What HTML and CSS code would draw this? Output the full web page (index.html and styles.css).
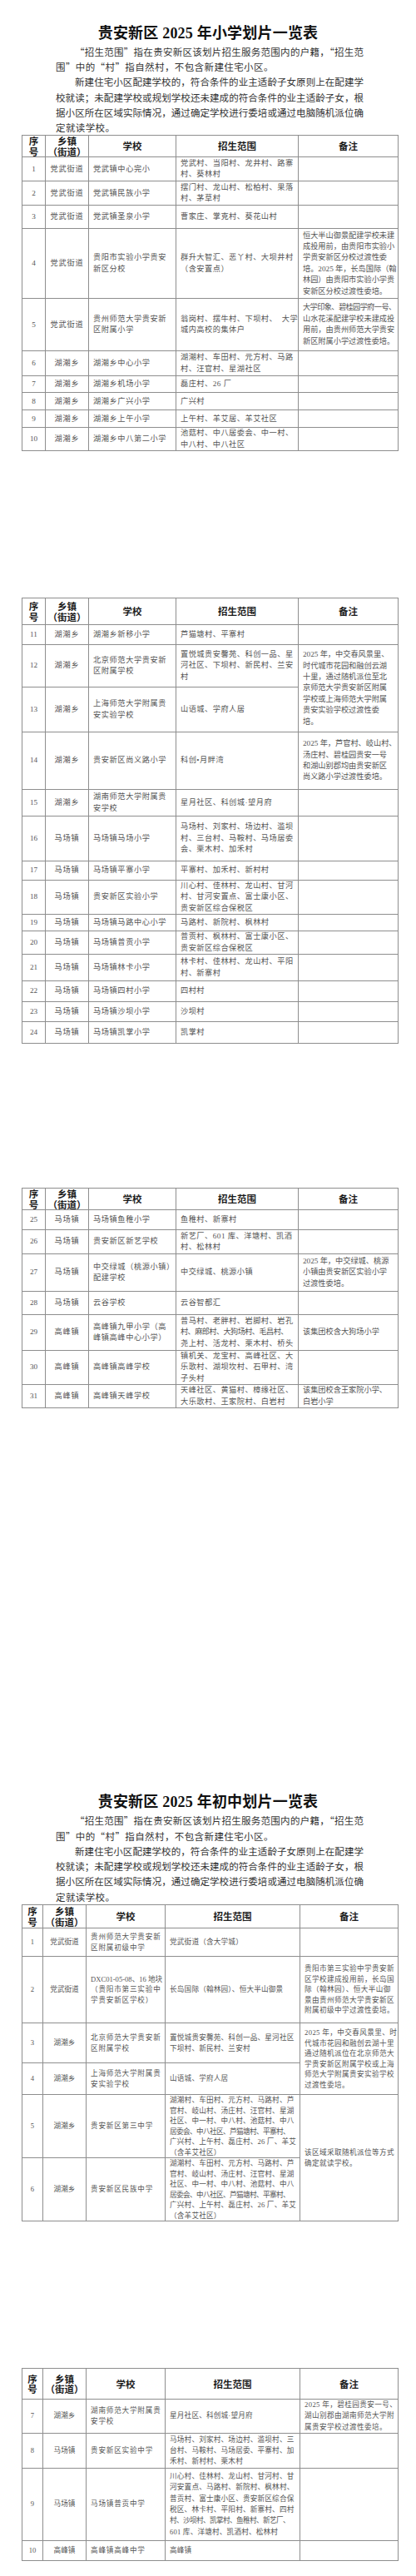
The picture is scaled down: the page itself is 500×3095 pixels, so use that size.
FILE: index.html
```html
<!DOCTYPE html>
<html lang="zh-CN">
<head>
<meta charset="utf-8">
<title>贵安新区2025年中小学划片一览表</title>
<link rel="stylesheet" href="styles.css">
</head>
<body>

<section class="page page-1">
  <h1 class="title">贵安新区 2025 年小学划片一览表</h1>
  <div class="intro">
    <span class="ln ind">“招生范围”指在贵安新区该划片招生服务范围内的户籍，“招生范</span>
    <span class="ln end">围”中的“村”指自然村，不包含新建住宅小区。</span>
    <span class="ln ind">新建住宅小区配建学校的，符合条件的业主适龄子女原则上在配建学</span>
    <span class="ln">校就读；未配建学校或规划学校还未建成的符合条件的业主适龄子女，根</span>
    <span class="ln">据小区所在区域实际情况，通过确定学校进行委培或通过电脑随机派位确</span>
    <span class="ln end">定就读学校。</span>
  </div>
  <table class="zt zt-a">
    <colgroup><col class="ca1"><col class="ca2"><col class="ca3"><col class="ca4"><col class="ca5"></colgroup>
    <tr class="h25"><th>序<br>号</th><th>乡镇<br>（街道）</th><th>学校</th><th>招生范围</th><th>备注</th></tr>
    <tr class="h29"><td class="no">1</td><td class="town">党武街道</td><td class="sch">党武镇中心完小</td><td class="rng">党武村、当阳村、龙井村、路寨<br>村、葵林村</td><td class="rmk"></td></tr>
    <tr class="h29"><td class="no">2</td><td class="town">党武街道</td><td class="sch">党武镇民族小学</td><td class="rng">摆门村、龙山村、松柏村、果落<br>村、茅草村</td><td class="rmk"></td></tr>
    <tr class="h28"><td class="no">3</td><td class="town">党武街道</td><td class="sch">党武镇圣泉小学</td><td class="rng">曹家庄、掌克村、葵花山村</td><td class="rmk"></td></tr>
    <tr class="h84"><td class="no">4</td><td class="town">党武街道</td><td class="sch">贵阳市实验小学贵安<br>新区分校</td><td class="rng">群升大智汇、恶丫村、大坝井村<br>（含安置点）</td><td class="rmk">恒大半山御景配建学校未建<br>成投用前，由贵阳市实验小<br>学贵安新区分校过渡性委<br>培。2025 年，长岛国际（翰<br>林园）由贵阳市实验小学贵<br>安新区分校过渡性委培。</td></tr>
    <tr class="h63"><td class="no">5</td><td class="town">党武街道</td><td class="sch">贵州师范大学贵安新<br>区附属小学</td><td class="rng">翁岗村、摆牛村、下坝村、&nbsp;&nbsp;大学<br>城内高校的集体户</td><td class="rmk"><span class="tight">大学印象、碧桂园学府一号、</span><br>山水花溪配建学校未建成投<br>用前，由贵州师范大学贵安<br>新区附属小学过渡性委培。</td></tr>
    <tr class="h30"><td class="no">6</td><td class="town">湖潮乡</td><td class="sch">湖潮乡中心小学</td><td class="rng">湖潮村、车田村、元方村、马路<br>村、汪官村、星湖社区</td><td class="rmk"></td></tr>
    <tr class="h20"><td class="no">7</td><td class="town">湖潮乡</td><td class="sch">湖潮乡机场小学</td><td class="rng">磊庄村、26 厂</td><td class="rmk"></td></tr>
    <tr class="h21"><td class="no">8</td><td class="town">湖潮乡</td><td class="sch">湖潮乡广兴小学</td><td class="rng">广兴村</td><td class="rmk"></td></tr>
    <tr class="h21"><td class="no">9</td><td class="town">湖潮乡</td><td class="sch">湖潮乡上午小学</td><td class="rng">上午村、羊艾居、羊艾社区</td><td class="rmk"></td></tr>
    <tr class="h27"><td class="no">10</td><td class="town">湖潮乡</td><td class="sch">湖潮乡中八第二小学</td><td class="rng">池菇村、中八居委会、中一村、<br>中八村、中八社区</td><td class="rmk"></td></tr>
  </table>
</section>

<section class="page page-2">
  <table class="zt zt-a">
    <colgroup><col class="ca1"><col class="ca2"><col class="ca3"><col class="ca4"><col class="ca5"></colgroup>
    <tr class="h32"><th>序<br>号</th><th>乡镇<br>（街道）</th><th>学校</th><th>招生范围</th><th>备注</th></tr>
    <tr class="h24"><td class="no">11</td><td class="town">湖潮乡</td><td class="sch">湖潮乡新移小学</td><td class="rng">芦猫塘村、平寨村</td><td class="rmk"></td></tr>
    <tr class="h51"><td class="no">12</td><td class="town">湖潮乡</td><td class="sch">北京师范大学贵安新<br>区附属学校</td><td class="rng">置悦城贵安馨苑、科创一品、星<br>河社区、下坝村、新民村、兰安<br>村</td><td class="rmk" rowspan="2">2025 年，中交春风景里、<br>时代城市花园和融创云湖<br>十里，通过随机派位至北<br>京师范大学贵安新区附属<br>学校或上海师范大学附属<br>贵安实验学校过渡性委<br>培。</td></tr>
    <tr class="h54"><td class="no">13</td><td class="town">湖潮乡</td><td class="sch">上海师范大学附属贵<br>安实验学校</td><td class="rng">山语城、学府人居</td></tr>
    <tr class="h69"><td class="no">14</td><td class="town">湖潮乡</td><td class="sch">贵安新区尚义路小学</td><td class="rng">科创•月畔湾</td><td class="rmk">2025 年，芦官村、岐山村、<br>汤庄村、碧桂园贵安一号<br>和湖山别郡均由贵安新区<br>尚义路小学过渡性委培。</td></tr>
    <tr class="h32"><td class="no">15</td><td class="town">湖潮乡</td><td class="sch">湖南师范大学附属贵<br>安学校</td><td class="rng">星月社区、科创城·望月府</td><td class="rmk"></td></tr>
    <tr class="h54"><td class="no">16</td><td class="town">马场镇</td><td class="sch">马场镇马场小学</td><td class="rng">马场村、刘家村、场边村、滥坝<br>村、三台村、马鞍村、马场居委<br>会、栗木村、加禾村</td><td class="rmk"></td></tr>
    <tr class="h23"><td class="no">17</td><td class="town">马场镇</td><td class="sch">马场镇平寨小学</td><td class="rng">平寨村、加禾村、新村村</td><td class="rmk"></td></tr>
    <tr class="h41"><td class="no">18</td><td class="town">马场镇</td><td class="sch">贵安新区实验小学</td><td class="rng">川心村、佳林村、龙山村、甘河<br>村、甘河安置点、富士康小区、<br>贵安新区综合保税区</td><td class="rmk"></td></tr>
    <tr class="h20"><td class="no">19</td><td class="town">马场镇</td><td class="sch">马场镇马路中心小学</td><td class="rng">马路村、新院村、枫林村</td><td class="rmk"></td></tr>
    <tr class="h27"><td class="no">20</td><td class="town">马场镇</td><td class="sch">马场镇普贡小学</td><td class="rng">普贡村、枫林村、富士康小区、<br>贵安新区综合保税区</td><td class="rmk"></td></tr>
    <tr class="h32"><td class="no">21</td><td class="town">马场镇</td><td class="sch">马场镇林卡小学</td><td class="rng">林卡村、佳林村、龙山村、平阳<br>村、新寨村</td><td class="rmk"></td></tr>
    <tr class="h25"><td class="no">22</td><td class="town">马场镇</td><td class="sch">马场镇四村小学</td><td class="rng">四村村</td><td class="rmk"></td></tr>
    <tr class="h24"><td class="no">23</td><td class="town">马场镇</td><td class="sch">马场镇沙坝小学</td><td class="rng">沙坝村</td><td class="rmk"></td></tr>
    <tr class="h26"><td class="no">24</td><td class="town">马场镇</td><td class="sch">马场镇凯掌小学</td><td class="rng">凯掌村</td><td class="rmk"></td></tr>
  </table>
</section>

<section class="page page-3">
  <table class="zt zt-a">
    <colgroup><col class="ca1"><col class="ca2"><col class="ca3"><col class="ca4"><col class="ca5"></colgroup>
    <tr class="h26"><th>序<br>号</th><th>乡镇<br>（街道）</th><th>学校</th><th>招生范围</th><th>备注</th></tr>
    <tr class="h24"><td class="no">25</td><td class="town">马场镇</td><td class="sch">马场镇鱼稚小学</td><td class="rng">鱼稚村、新寨村</td><td class="rmk"></td></tr>
    <tr class="h29"><td class="no">26</td><td class="town">马场镇</td><td class="sch">贵安新区新艺学校</td><td class="rng">新艺厂、601 库、洋塘村、凯酒<br>村、松林村</td><td class="rmk"></td></tr>
    <tr class="h45"><td class="no">27</td><td class="town">马场镇</td><td class="sch">中交绿城（桃源小镇）<br>配建学校</td><td class="rng">中交绿城、桃源小镇</td><td class="rmk">2025 年，中交绿城、桃源<br>小镇由贵安新区实验小学<br>过渡性委培。</td></tr>
    <tr class="h28"><td class="no">28</td><td class="town">马场镇</td><td class="sch">云谷学校</td><td class="rng">云谷智都汇</td><td class="rmk"></td></tr>
    <tr class="h43"><td class="no">29</td><td class="town">高峰镇</td><td class="sch">高峰镇九甲小学（高<br>峰镇高峰中心小学）</td><td class="rng">普马村、老胖村、岩脚村、岩孔<br><span class="tight">村、麻郎村、大狗场村、毛昌村、</span><br>尧上村、活龙村、栗木村、桥头</td><td class="rmk">该集团校含大狗场小学</td></tr>
    <tr class="h40"><td class="no">30</td><td class="town">高峰镇</td><td class="sch">高峰镇高峰学校</td><td class="rng">镇机关、龙宝村、高峰社区、大<br>乐歌村、湖坝坎村、石甲村、湾<br>子头村</td><td class="rmk"></td></tr>
    <tr class="h28"><td class="no">31</td><td class="town">高峰镇</td><td class="sch">高峰镇天峰学校</td><td class="rng">天峰社区、黄猫村、樟缘社区、<br>大乐歌村、王家院村、白岩村</td><td class="rmk">该集团校含王家院小学、<br>白岩小学</td></tr>
  </table>
</section>

<section class="page page-4">
  <h1 class="title">贵安新区 2025 年初中划片一览表</h1>
  <div class="intro intro-b">
    <span class="ln ind">“招生范围”指在贵安新区该划片招生服务范围内的户籍，“招生范</span>
    <span class="ln end">围”中的“村”指自然村，不包含新建住宅小区。</span>
    <span class="ln ind">新建住宅小区配建学校的，符合条件的业主适龄子女原则上在配建学</span>
    <span class="ln">校就读；未配建学校或规划学校还未建成的符合条件的业主适龄子女，根</span>
    <span class="ln">据小区所在区域实际情况，通过确定学校进行委培或通过电脑随机派位确</span>
    <span class="ln end">定就读学校。</span>
  </div>
  <table class="zt zt-b">
    <colgroup><col class="cb1"><col class="cb2"><col class="cb3"><col class="cb4"><col class="cb5"></colgroup>
    <tr class="h28"><th>序<br>号</th><th>乡镇<br>（街道）</th><th>学校</th><th>招生范围</th><th>备注</th></tr>
    <tr class="h34"><td class="no">1</td><td class="town">党武街道</td><td class="sch">贵州师范大学贵安新<br>区附属初级中学</td><td class="rng">党武街道（含大学城）</td><td class="rmk"></td></tr>
    <tr class="h80"><td class="no">2</td><td class="town">党武街道</td><td class="sch"><span class="latin">DXC01-05-08、16 地块</span><br>（贵阳市第三实验中<br>学贵安新区学校）</td><td class="rng">长岛国际（翰林园）、恒大半山御景</td><td class="rmk">贵阳市第三实验中学贵安新<br>区学校建成投用前，长岛国<br>际（翰林园）、恒大半山御<br>景由贵州师范大学贵安新区<br>附属初级中学过渡性委培。</td></tr>
    <tr class="h48"><td class="no">3</td><td class="town">湖潮乡</td><td class="sch">北京师范大学贵安新<br>区附属学校</td><td class="rng">置悦城贵安馨苑、科创一品、星河社区<br>下坝村、新民村、兰安村</td><td class="rmk" rowspan="2">2025 年，中交春风景里、时<br>代城市花园和融创云湖十里<br>通过随机派位在北京师范大<br>学贵安新区附属学校或上海<br>师范大学附属贵安实验学校<br>过渡性委培。</td></tr>
    <tr class="h38"><td class="no">4</td><td class="town">湖潮乡</td><td class="sch">上海师范大学附属贵<br>安实验学校</td><td class="rng">山语城、学府人居</td></tr>
    <tr class="h76"><td class="no">5</td><td class="town">湖潮乡</td><td class="sch">贵安新区第三中学</td><td class="rng">湖潮村、车田村、元方村、马路村、芦<br>官村、岐山村、汤庄村、汪官村、星湖<br>社区、中一村、中八村、池菇村、中八<br><span class="tight">居委会、中八社区、芦猫塘村、平寨村、</span><br>广兴村、上午村、磊庄村、26 厂、羊艾<br>（含羊艾社区）</td><td class="rmk" rowspan="2">该区域采取随机派位等方式<br>确定就读学校。</td></tr>
    <tr class="h75"><td class="no">6</td><td class="town">湖潮乡</td><td class="sch">贵安新区民族中学</td><td class="rng">湖潮村、车田村、元方村、马路村、芦<br>官村、岐山村、汤庄村、汪官村、星湖<br>社区、中一村、中八村、池菇村、中八<br><span class="tight">居委会、中八社区、芦猫塘村、平寨村、</span><br>广兴村、上午村、磊庄村、26 厂、羊艾<br>（含羊艾社区）</td></tr>
  </table>
</section>

<section class="page page-5">
  <table class="zt zt-b">
    <colgroup><col class="cb1"><col class="cb2"><col class="cb3"><col class="cb4"><col class="cb5"></colgroup>
    <tr class="h37"><th>序<br>号</th><th>乡镇<br>（街道）</th><th>学校</th><th>招生范围</th><th>备注</th></tr>
    <tr class="h38"><td class="no">7</td><td class="town">湖潮乡</td><td class="sch">湖南师范大学附属贵<br>安学校</td><td class="rng">星月社区、科创城·望月府</td><td class="rmk">2025 年，碧桂园贵安一号、<br>湖山别郡由湖南师范大学附<br>属贵安学校过渡性委培。</td></tr>
    <tr class="h42"><td class="no">8</td><td class="town">马场镇</td><td class="sch">贵安新区实验中学</td><td class="rng">马场村、刘家村、场边村、滥坝村、三<br>台村、马鞍村、马场居委、平寨村、加<br>禾村、新村村、栗木村</td><td class="rmk"></td></tr>
    <tr class="h87"><td class="no">9</td><td class="town">马场镇</td><td class="sch">马场镇普贡中学</td><td class="rng">川心村、佳林村、龙山村、甘河村、甘<br>河安置点、马路村、新院村、枫林村、<br>普贡村、富士康小区、贵安新区综合保<br>税区、林卡村、平阳村、新寨村、四村<br><span class="tight">村、沙坝村、凯掌村、鱼稚村、新艺厂、</span><br>601 库、洋塘村、凯酒村、松林村</td><td class="rmk"></td></tr>
    <tr class="h24"><td class="no">10</td><td class="town">高峰镇</td><td class="sch">高峰镇高峰中学</td><td class="rng">高峰镇</td><td class="rmk"></td></tr>
  </table>
</section>

</body>
</html>
```

FILE: styles.css
```css
html, body {
  margin: 0;
  padding: 0;
  background: #ffffff;
}

body {
  width: 500px;
  font-family: "Noto Sans CJK SC", "Noto Sans", sans-serif;
  color: #333333;
}

.page {
  width: 500px;
}

.page-1 { padding-top: 29px; }
.page-2 { margin-top: 176px; }
.page-3 { margin-top: 173px; }
.page-4 { margin-top: 462px; }
.page-5 { margin-top: 176px; padding-bottom: 31px; }

.title {
  margin: 0;
  height: 22px;
  font-family: "Liberation Serif", "Noto Sans CJK SC", serif;
  font-size: 18px;
  line-height: 22px;
  font-weight: 700;
  text-align: center;
  color: #111111;
  letter-spacing: 0.2px;
}

.intro {
  margin: 2px 0 0 67px;
  width: 370px;
  font-size: 11.5px;
  line-height: 18.2px;
  color: #333333;
}

.intro-b {
  line-height: 18.3px;
}

.ln {
  display: block;
  white-space: nowrap;
  text-align: justify;
  text-align-last: justify;
}

.ln.ind {
  text-indent: 2em;
}

.ln.end {
  text-align-last: left;
  letter-spacing: 0.4px;
}

/* zone tables */
.zt {
  margin-left: 26px;
  width: 452px;
  table-layout: fixed;
  border-collapse: collapse;
  border-spacing: 0;
}

.ca1 { width: 28px; }
.ca2 { width: 52px; }
.ca3 { width: 105px; }
.ca4 { width: 147px; }
.ca5 { width: 120px; }

.cb1 { width: 25px; }
.cb2 { width: 52px; }
.cb3 { width: 95px; }
.cb4 { width: 162px; }
.cb5 { width: 118px; }

.zt th,
.zt td {
  border: 1px solid #8e8e8e;
  padding: 0;
  vertical-align: middle;
  white-space: nowrap;
}

.zt th {
  font-family: "Noto Sans CJK SC", sans-serif;
  font-size: 11.5px;
  line-height: 12.5px;
  font-weight: 700;
  color: #1c1c1c;
  text-align: center;
}

.zt td {
  font-family: "Liberation Serif", "Noto Sans CJK SC", serif;
  color: #555555;
  text-align: left;
}

.zt-a td {
  font-size: 9.2px;
  line-height: 13.4px;
}

.zt-b td {
  font-size: 8.6px;
  line-height: 12.5px;
}

.page-5 .zt-b td {
  line-height: 13.3px;
}

.zt td.no,
.zt td.town {
  text-align: center;
}

.zt td.sch,
.zt td.rng,
.zt td.rmk {
  padding: 0 5px;
}

.zt-a td.town { letter-spacing: 0.8px; }
.zt-a td.sch { letter-spacing: 0.6px; }
.zt-a td.rng { letter-spacing: 0.5px; }
.zt-a td.rmk { letter-spacing: 0; }

.zt-b td.town { letter-spacing: 0; }
.zt-b td.sch { letter-spacing: 0.8px; }
.zt-b td.rng { letter-spacing: 0.2px; }
.zt-b td.rmk { letter-spacing: 0.4px; }

.tight { letter-spacing: -0.6px; }
.latin { letter-spacing: 0; }

/* row heights */
.h20 { height: 20px; }
.h21 { height: 21px; }
.h23 { height: 23px; }
.h24 { height: 24px; }
.h25 { height: 25px; }
.h26 { height: 26px; }
.h27 { height: 27px; }
.h28 { height: 28px; }
.h29 { height: 29px; }
.h30 { height: 30px; }
.h32 { height: 32px; }
.h34 { height: 34px; }
.h37 { height: 37px; }
.h38 { height: 38px; }
.h40 { height: 40px; }
.h41 { height: 41px; }
.h42 { height: 42px; }
.h43 { height: 43px; }
.h45 { height: 45px; }
.h48 { height: 48px; }
.h51 { height: 51px; }
.h54 { height: 54px; }
.h63 { height: 63px; }
.h69 { height: 69px; }
.h75 { height: 75px; }
.h76 { height: 76px; }
.h80 { height: 80px; }
.h84 { height: 84px; }
.h87 { height: 87px; }
```
